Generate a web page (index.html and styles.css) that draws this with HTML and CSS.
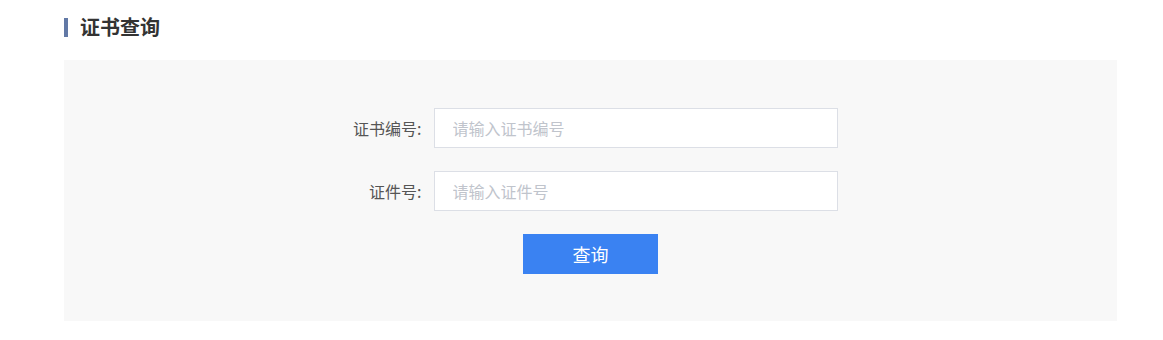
FILE: index.html
```html
<!DOCTYPE html>
<html lang="zh">
<head>
<meta charset="utf-8">
<link rel="stylesheet" href="styles.css">
</head>
<body>
<div class="page">
  <div class="title"><span class="bar"></span><h2>证书查询</h2></div>
  <div class="panel">
    <form class="form">
      <div class="row">
        <label class="label">证书编号:</label>
        <input class="input" type="text" placeholder="请输入证书编号">
      </div>
      <div class="row">
        <label class="label">证件号:</label>
        <input class="input" type="text" placeholder="请输入证件号">
      </div>
      <button class="btn" type="button">查询</button>
    </form>
  </div>
</div>
</body>
</html>
```
FILE: styles.css
```css
* { box-sizing: border-box; }
html, body { margin: 0; padding: 0; background: #fff; }
body { font-family: "Noto Sans CJK SC", "Liberation Sans", sans-serif; color: #333; }
.page { padding: 13px 46px 0 64px; }
.title { display: flex; align-items: center; height: 28px; }
.bar { width: 4px; height: 19px; background: #6279a6; margin-right: 12px; }
.title h2 { margin: 0; font-size: 20px; font-weight: bold; color: #333; line-height: 28px; }
.panel { margin-top: 19px; background: #f8f8f8; height: 261px; padding-top: 48px; }
.form { display: flex; flex-direction: column; align-items: center; gap: 23px; }
.row { display: flex; align-items: center; width: 494px; }
.label { width: 90px; padding-right: 12px; text-align: right; font-size: 16px; color: #555; white-space: nowrap; }
.input { width: 404px; height: 40px; border: 1px solid #dcdfe6; background: #fff; padding: 0 18px; font-size: 16px; font-family: inherit; color: #333; outline: none; }
.input::placeholder { color: #c0c4cc; }
.btn { width: 135px; height: 40px; border: none; background: #3a82f2; color: #fff; font-size: 18px; font-family: inherit; cursor: pointer; padding: 0; }
```
